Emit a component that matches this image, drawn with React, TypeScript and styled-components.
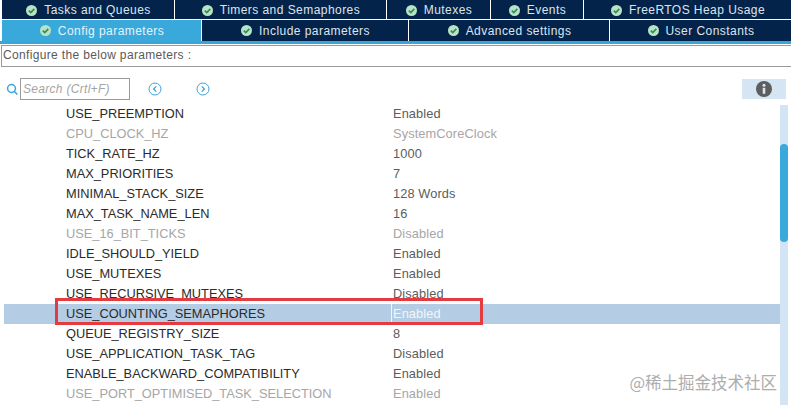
import React from 'react';
import styled, { createGlobalStyle } from 'styled-components';

const GlobalStyle = createGlobalStyle`
  html, body {
    margin: 0;
    padding: 0;
    background: #fff;
    overflow: hidden;
  }
  body {
    font-family: "Liberation Sans", Arial, sans-serif;
  }
`;

const Page = styled.div`
  position: relative;
  width: 791px;
  height: 405px;
  overflow: hidden;
  background: #fff;
`;

const TabRow = styled.div<{ $columns: string; $height: number; $textOffset?: number }>`
  display: grid;
  grid-template-columns: ${({ $columns }) => $columns};
  height: ${({ $height }) => $height}px;
  padding-left: 2px;
  margin-bottom: 1px;
  column-gap: 1px;

  & > div {
    padding-top: ${({ $textOffset }) => $textOffset ?? 0}px;
  }
`;

const Tab = styled.div<{ $active?: boolean }>`
  display: flex;
  align-items: center;
  justify-content: center;
  gap: 6px;
  font-size: 12px;
  letter-spacing: 0.45px;
  color: ${({ $active }) => ($active ? '#e6f3fa' : '#dfe5ec')};
  background: ${({ $active }) => ($active ? '#39a9dc' : '#03234b')};
  white-space: nowrap;
`;

const AccentLine = styled.div`
  height: 3px;
  margin-top: -1px;
  background: #3ba5d8;
`;

const DescriptionBox = styled.div`
  height: 20px;
  margin: 1px 0 0 1px;
  width: 788px;
  border: 1px solid #9a9a9a;
  font-size: 12px;
  line-height: 19px;
  letter-spacing: 0.34px;
  color: #5a5a5a;
  padding-left: 1px;
  box-sizing: content-box;
`;

const Toolbar = styled.div`
  display: flex;
  align-items: center;
  height: 22px;
  margin-top: 11px;
  padding-left: 6px;
`;

const SearchInput = styled.div`
  box-sizing: border-box;
  width: 110px;
  height: 22px;
  margin-left: 2px;
  padding-left: 2px;
  border: 1px solid #9a9a9a;
  font-size: 12px;
  line-height: 20px;
  font-style: italic;
  letter-spacing: 0.3px;
  color: #a4a4a4;
`;

const NavButton = styled.svg<{ $gap: number }>`
  width: 14px;
  height: 14px;
  margin-left: ${({ $gap }) => $gap}px;
  fill: none;
  stroke: #3ba5d8;
`;

const InfoButton = styled.div`
  display: flex;
  align-items: center;
  justify-content: center;
  width: 44px;
  height: 20px;
  margin-left: auto;
  margin-right: 5px;
  background: #d6e5f4;
`;

const Body = styled.div`
  display: flex;
  margin-top: 4px;
`;

const ParamList = styled.div`
  width: 776px;
  margin-left: 4px;
`;

const ParamRow = styled.div<{ $selected?: boolean }>`
  display: grid;
  grid-template-columns: 387px 1fr;
  height: 20px;
  line-height: 20px;
  font-size: 12.8px;
  background: ${({ $selected }) => ($selected ? '#b4cde4' : 'transparent')};
`;

const ParamName = styled.div<{ $muted?: boolean }>`
  padding-left: 62px;
  color: ${({ $muted }) => ($muted ? '#a6a6a6' : '#2b2b2b')};
`;

const ParamValue = styled.div<{ $muted?: boolean; $selected?: boolean }>`
  padding-left: 1px;
  letter-spacing: 0.1px;
  color: ${({ $muted, $selected }) =>
    $selected ? '#f1f6fb' : $muted ? '#a6a6a6' : '#5c5c5c'};
  border-left: 1px solid ${({ $selected }) => ($selected ? '#f4f8fc' : 'transparent')};
`;

const ScrollTrack = styled.div`
  position: relative;
  width: 8px;
  height: 301px;
  margin-top: 1px;
  background: #d3e4f5;
`;

const ScrollThumb = styled.div`
  position: absolute;
  top: 39px;
  left: 0;
  width: 8px;
  height: 98px;
  border-radius: 4px;
  background: #39a9dc;
`;

const Highlight = styled.div`
  position: absolute;
  left: 55px;
  top: 298px;
  width: 428px;
  height: 27px;
  box-sizing: border-box;
  border: 3px solid #e63a41;
`;

const Watermark = styled.div`
  position: absolute;
  right: 14px;
  bottom: 13px;
  font-family: "Noto Sans CJK SC", sans-serif;
  font-size: 16.5px;
  line-height: 20px;
  color: #adadad;
`;

const Check = () => (
  <svg width="13" height="13" viewBox="0 0 13 13">
    <circle cx="6.5" cy="6.5" r="5.5" fill="#b9e3c6" />
    <path d="M3.8 6.6 5.8 8.5 9.3 4.8" fill="none" stroke="#2f8f58" strokeWidth="1.7" />
  </svg>
);

const topTabs = ['Tasks and Queues', 'Timers and Semaphores', 'Mutexes', 'Events', 'FreeRTOS Heap Usage'];
const bottomTabs = ['Config parameters', 'Include parameters', 'Advanced settings', 'User Constants'];

const params = [
  { name: 'USE_PREEMPTION', value: 'Enabled' },
  { name: 'CPU_CLOCK_HZ', value: 'SystemCoreClock', muted: true },
  { name: 'TICK_RATE_HZ', value: '1000' },
  { name: 'MAX_PRIORITIES', value: '7' },
  { name: 'MINIMAL_STACK_SIZE', value: '128 Words' },
  { name: 'MAX_TASK_NAME_LEN', value: '16' },
  { name: 'USE_16_BIT_TICKS', value: 'Disabled', muted: true },
  { name: 'IDLE_SHOULD_YIELD', value: 'Enabled' },
  { name: 'USE_MUTEXES', value: 'Enabled' },
  { name: 'USE_RECURSIVE_MUTEXES', value: 'Disabled' },
  { name: 'USE_COUNTING_SEMAPHORES', value: 'Enabled', selected: true },
  { name: 'QUEUE_REGISTRY_SIZE', value: '8' },
  { name: 'USE_APPLICATION_TASK_TAG', value: 'Disabled' },
  { name: 'ENABLE_BACKWARD_COMPATIBILITY', value: 'Enabled' },
  { name: 'USE_PORT_OPTIMISED_TASK_SELECTION', value: 'Enabled', muted: true },
];

const App: React.FC = () => (
  <Page>
    <GlobalStyle />
    <TabRow $columns="172px 211px 103px 92px 1fr" $height={19} $textOffset={1}>
      {topTabs.map((label) => (
        <Tab key={label}>
          <Check />
          {label}
        </Tab>
      ))}
    </TabRow>
    <TabRow $columns="199px 206px 200px 1fr" $height={21}>
      {bottomTabs.map((label, i) => (
        <Tab key={label} $active={i === 0}>
          <Check />
          {label}
        </Tab>
      ))}
    </TabRow>
    <AccentLine />
    <DescriptionBox>Configure the below parameters :</DescriptionBox>
    <Toolbar>
      <svg width="12" height="13" viewBox="0 0 12 13" fill="none" stroke="#3ba5d8" strokeWidth="1.5">
        <circle cx="5.5" cy="5.5" r="3.9" />
        <path d="M8.2 8.2 11.3 11.6" />
      </svg>
      <SearchInput>Search (Crtl+F)</SearchInput>
      <NavButton $gap={18} viewBox="0 0 14 14">
        <circle cx="7" cy="7" r="6" />
        <path d="M8.2 4.4 5.6 7 8.2 9.6" strokeWidth="1.3" />
      </NavButton>
      <NavButton $gap={34} viewBox="0 0 14 14">
        <circle cx="7" cy="7" r="6" />
        <path d="M5.8 4.4 8.4 7 5.8 9.6" strokeWidth="1.3" />
      </NavButton>
      <InfoButton>
        <svg width="16" height="16" viewBox="0 0 16 16">
          <circle cx="8" cy="8" r="8" fill="#5e5e5e" />
          <rect x="6.7" y="6.8" width="2.6" height="6" fill="#d6e5f4" />
          <circle cx="8" cy="4.3" r="1.5" fill="#d6e5f4" />
        </svg>
      </InfoButton>
    </Toolbar>
    <Body>
      <ParamList>
        {params.map((p) => (
          <ParamRow key={p.name} $selected={p.selected}>
            <ParamName $muted={p.muted}>{p.name}</ParamName>
            <ParamValue $muted={p.muted} $selected={p.selected}>
              {p.value}
            </ParamValue>
          </ParamRow>
        ))}
      </ParamList>
      <ScrollTrack>
        <ScrollThumb />
      </ScrollTrack>
    </Body>
    <Highlight />
    <Watermark>@稀土掘金技术社区</Watermark>
  </Page>
);

export default App;
